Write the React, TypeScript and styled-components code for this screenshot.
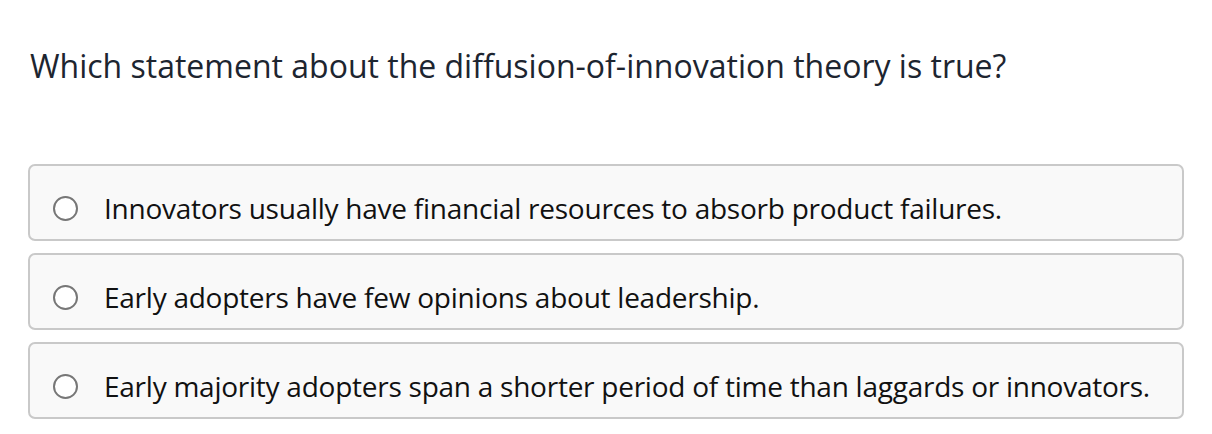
import React from 'react'
import styled, { createGlobalStyle } from 'styled-components'

const GlobalStyle = createGlobalStyle`
    body {
        margin: 0;
        background: #ffffff;
        font-family: "Open Sans", "Liberation Sans", sans-serif;
    }
`

const options = [
    'Innovators usually have financial resources to absorb product failures.',
    'Early adopters have few opinions about leadership.',
    'Early majority adopters span a shorter period of time than laggards or innovators.',
]

export default function App() {
    return (
        <>
            <GlobalStyle />
            <StyledQuiz>
                <Question>Which statement about the diffusion-of-innovation theory is true?</Question>
                <OptionList>
                    {options.map((text) => (
                        <Option key={text}>
                            <Radio />
                            <OptionText>{text}</OptionText>
                        </Option>
                    ))}
                </OptionList>
            </StyledQuiz>
        </>
    )
}

const StyledQuiz = styled.div`
    padding: 46px 28px 0 28px;
    width: 1156px;
`

const Question = styled.h2`
    margin: 0 0 0 2px;
    font-size: 32px;
    font-weight: 400;
    line-height: 40px;
    color: #1d2530;
`

const OptionList = styled.div`
    display: flex;
    flex-direction: column;
    gap: 12.5px;
    margin-top: 78px;
`

const Option = styled.label`
    display: flex;
    align-items: center;
    gap: 26px;
    height: 76.5px;
    box-sizing: border-box;
    padding: 12px 0 0 23px;
    background: #f9f9f9;
    border: 2px solid #c9c9c9;
    border-radius: 7px;
`

const Radio = styled.span`
    width: 25px;
    height: 25px;
    box-sizing: border-box;
    border: 2px solid #777777;
    border-radius: 50%;
    background: #ffffff;
    flex-shrink: 0;
`

const OptionText = styled.span`
    font-size: 28px;
    color: #111111;
    letter-spacing: -0.25px;
`
